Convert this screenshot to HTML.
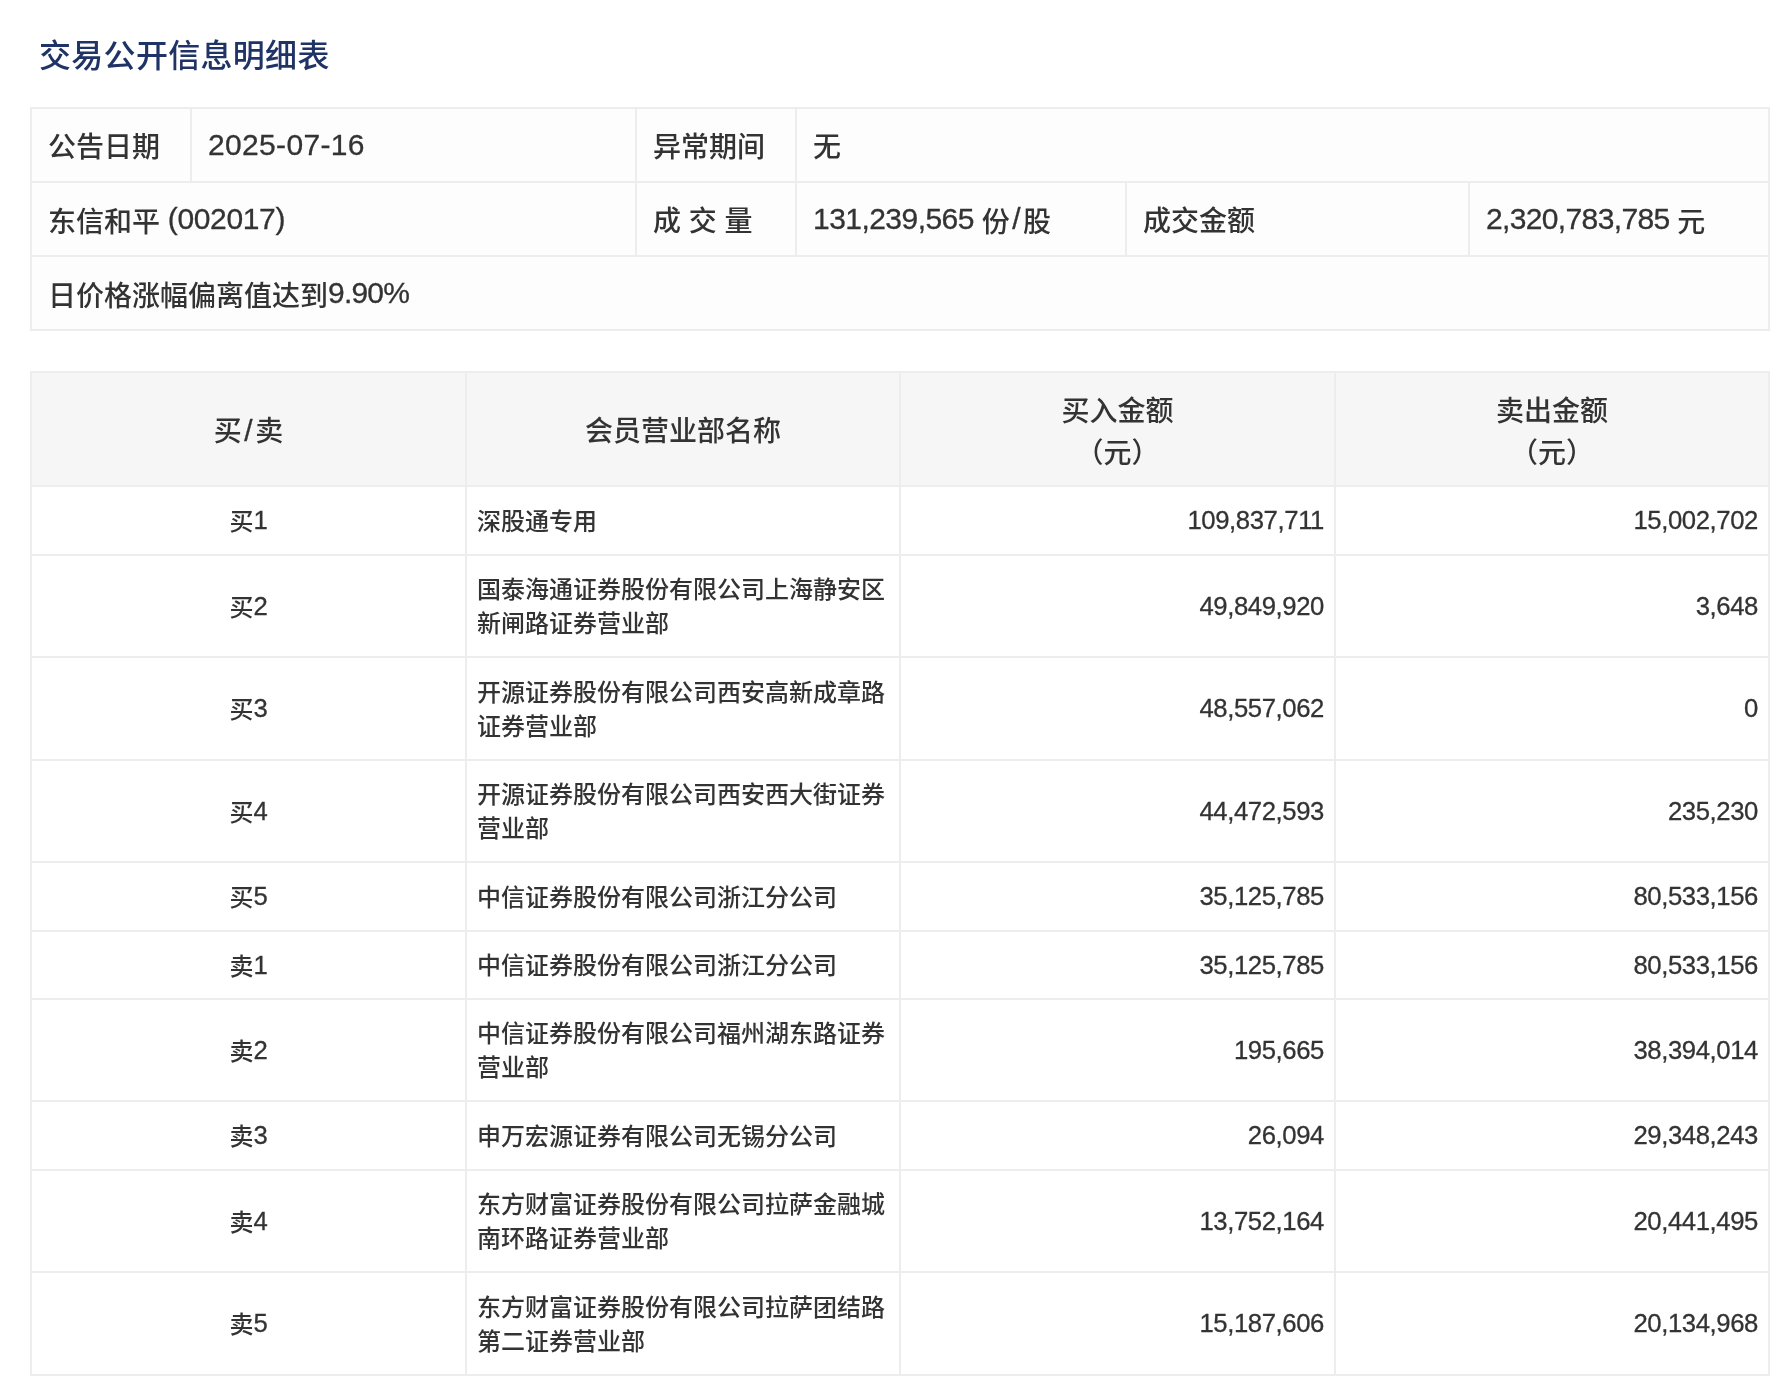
<!DOCTYPE html>
<html lang="zh-CN">
<head>
<meta charset="utf-8">
<title>交易公开信息明细表</title>
<style>
*{box-sizing:border-box;}
html,body{margin:0;padding:0;background:#fff;}
body{width:1782px;height:1382px;overflow:hidden;position:relative;
  font-family:"Liberation Sans","Noto Sans CJK SC",sans-serif;color:#333;font-weight:500;}
.page{position:absolute;left:0;top:0;width:1782px;height:1382px;will-change:transform;}
h2.title{position:absolute;left:39px;top:31px;margin:0;font-size:32px;line-height:50px;
  font-weight:500;color:#1f3366;white-space:nowrap;letter-spacing:0.3px;}
table{border-collapse:collapse;border-spacing:0;table-layout:fixed;position:absolute;left:30px;width:1738px;}
td,th{border:2px solid #ededed;padding:0 16px;font-weight:500;overflow:hidden;}
/* top info table */
table.info{top:107px;}
table.info td{background:#fdfdfd;font-size:28px;line-height:40px;height:74px;text-align:left;white-space:nowrap;padding-top:6px;}
table.info .n{font-size:30px;position:relative;top:-3px;}
table.info .v{letter-spacing:-0.54px;}
table.info .a{letter-spacing:-0.64px;}
table.info .p{letter-spacing:-0.8px;}
table.info .d{letter-spacing:0.33px;}
table.info .k{letter-spacing:-0.35px;}
.s{font-size:30px;margin:0 2.5px;}
.n,.s{-webkit-text-stroke:0.3px #333;}
/* main list table */
table.list{top:371px;}
table.list th{background:#f6f6f6;font-size:28px;line-height:42px;text-align:center;height:114px;padding-top:8px;}
table.list th.one{padding-top:5px;}
table.list td{background:#fff;font-size:24px;line-height:34px;padding:2px 10px 0;}
table.list td.c{text-align:center;}
table.list td.r{text-align:right;}
table.list .n{font-size:25.7px;letter-spacing:-0.4px;position:relative;top:-1px;}
</style>
</head>
<body>
<div class="page">
<h2 class="title">交易公开信息明细表</h2>

<table class="info">
<colgroup><col style="width:160px"><col style="width:445px"><col style="width:160px"><col style="width:330px"><col style="width:343px"><col style="width:300px"></colgroup>
<tr><td>公告日期</td><td><span class="n d">2025-07-16</span></td><td>异常期间</td><td colspan="3">无</td></tr>
<tr><td colspan="2">东信和平 <span class="n k">(002017)</span></td><td>成 交 量</td><td><span class="n v">131,239,565</span> 份<span class="n s">/</span>股</td><td>成交金额</td><td><span class="n a">2,320,783,785</span> 元</td></tr>
<tr><td colspan="6">日价格涨幅偏离值达到<span class="n p">9.90%</span></td></tr>
</table>

<table class="list">
<colgroup><col style="width:435px"><col style="width:434px"><col style="width:435px"><col style="width:434px"></colgroup>
<tr><th class="one">买<span class="s">/</span>卖</th><th class="one">会员营业部名称</th><th>买入金额<br>（元）</th><th>卖出金额<br>（元）</th></tr>
<tr style="height:69px"><td class="c">买<span class="n">1</span></td><td>深股通专用</td><td class="r"><span class="n">109,837,711</span></td><td class="r"><span class="n">15,002,702</span></td></tr>
<tr style="height:102px"><td class="c">买<span class="n">2</span></td><td>国泰海通证券股份有限公司上海静安区新闸路证券营业部</td><td class="r"><span class="n">49,849,920</span></td><td class="r"><span class="n">3,648</span></td></tr>
<tr style="height:103px"><td class="c">买<span class="n">3</span></td><td>开源证券股份有限公司西安高新成章路证券营业部</td><td class="r"><span class="n">48,557,062</span></td><td class="r"><span class="n">0</span></td></tr>
<tr style="height:102px"><td class="c">买<span class="n">4</span></td><td>开源证券股份有限公司西安西大街证券营业部</td><td class="r"><span class="n">44,472,593</span></td><td class="r"><span class="n">235,230</span></td></tr>
<tr style="height:69px"><td class="c">买<span class="n">5</span></td><td>中信证券股份有限公司浙江分公司</td><td class="r"><span class="n">35,125,785</span></td><td class="r"><span class="n">80,533,156</span></td></tr>
<tr style="height:68px"><td class="c">卖<span class="n">1</span></td><td>中信证券股份有限公司浙江分公司</td><td class="r"><span class="n">35,125,785</span></td><td class="r"><span class="n">80,533,156</span></td></tr>
<tr style="height:102px"><td class="c">卖<span class="n">2</span></td><td>中信证券股份有限公司福州湖东路证券营业部</td><td class="r"><span class="n">195,665</span></td><td class="r"><span class="n">38,394,014</span></td></tr>
<tr style="height:69px"><td class="c">卖<span class="n">3</span></td><td>申万宏源证券有限公司无锡分公司</td><td class="r"><span class="n">26,094</span></td><td class="r"><span class="n">29,348,243</span></td></tr>
<tr style="height:102px"><td class="c">卖<span class="n">4</span></td><td>东方财富证券股份有限公司拉萨金融城南环路证券营业部</td><td class="r"><span class="n">13,752,164</span></td><td class="r"><span class="n">20,441,495</span></td></tr>
<tr style="height:103px"><td class="c">卖<span class="n">5</span></td><td>东方财富证券股份有限公司拉萨团结路第二证券营业部</td><td class="r"><span class="n">15,187,606</span></td><td class="r"><span class="n">20,134,968</span></td></tr>
</table>
</div>
</body>
</html>
